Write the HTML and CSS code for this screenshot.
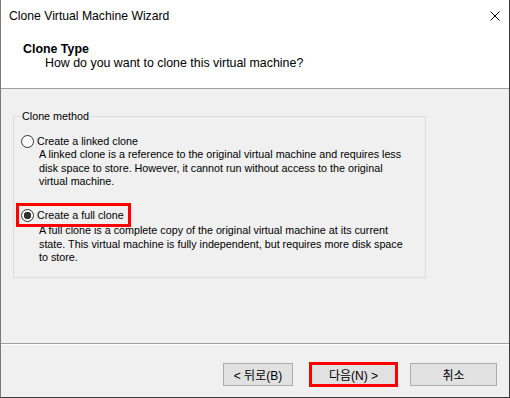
FILE: index.html
```html
<!DOCTYPE html>
<html lang="en">
<head>
    <meta charset="UTF-8">
    <meta name="viewport" content="width=device-width, initial-scale=1.0">
    <title>Clone Virtual Machine Wizard</title>
    <link rel="stylesheet" href="styles.css">
</head>
<body>

<div class="window">
    <!-- Title bar + wizard header -->
    <div class="top">
        <div class="titlebar">
            <span class="title">Clone Virtual Machine Wizard</span>
            <svg class="close" width="10" height="10" viewBox="0 0 10 10">
                <path d="M0.5 0.5 L9.5 9.5 M9.5 0.5 L0.5 9.5" stroke="#000" stroke-width="1" fill="none"/>
            </svg>
        </div>
        <div class="header">
            <div class="header-title">Clone Type</div>
            <div class="header-sub">How do you want to clone this virtual machine?</div>
        </div>
    </div>

    <!-- Page content -->
    <div class="content">
        <fieldset class="group">
            <legend>Clone method</legend>

            <div class="option">
                <label class="radio-row"><span class="radio"></span>Create a linked clone</label>
                <p class="desc">A linked clone is a reference to the original virtual machine and requires less<br>disk space to store. However, it cannot run without access to the original<br>virtual machine.</p>
            </div>

            <div class="option option-full">
                <label class="radio-row marked"><span class="radio checked"></span>Create a full clone</label>
                <p class="desc">A full clone is a complete copy of the original virtual machine at its current<br>state. This virtual machine is fully independent, but requires more disk space<br>to store.</p>
            </div>
        </fieldset>
    </div>

    <!-- Buttons -->
    <div class="footer">
        <button class="btn btn-back">&lt; 뒤로(B)</button>
        <button class="btn btn-next">다음(N) &gt;</button>
        <button class="btn btn-cancel">취소</button>
    </div>
</div>

</body>
</html>
```

FILE: styles.css
```css
body {
    margin: 0;
    font-family: "Liberation Sans", Arial, sans-serif;
    color: #000;
    background-color: #f0f0f0;
}

.window {
    width: 510px;
    height: 398px;
    box-sizing: border-box;
    display: flex;
    flex-direction: column;
    background-color: #f0f0f0;
    border-left: 1px solid #7a7a7a;
    border-right: 1px solid #3a3a3a;
    border-bottom: 1px solid #3a3a3a;
}

/* Title bar and header */
.top {
    height: 88px;
    background-color: #fff;
    border-bottom: 1px solid #a0a0a0;
}

.titlebar {
    height: 31px;
    display: flex;
    align-items: center;
    justify-content: space-between;
    padding: 0 9px 0 8px;
    font-size: 12.2px;
}

.header {
    padding: 11px 0 0 22px;
    font-size: 12.4px;
    line-height: 14px;
}

.header-title {
    font-weight: bold;
}

.header-sub {
    padding-left: 22px;
}

/* Content */
.content {
    flex: 1;
    padding: 20px 0 0 12px;
}

.group {
    width: 413px;
    box-sizing: border-box;
    margin: 0;
    padding: 11px 0 12px 7px;
    border: 1px solid #dcdcdc;
    font-size: 10.75px;
}

.group legend {
    padding: 0 1px;
    line-height: 14px;
}

.radio-row {
    display: flex;
    align-items: center;
    gap: 3px;
    width: max-content;
    padding-right: 2px;
    line-height: 14px;
}

.radio {
    width: 13px;
    height: 13px;
    box-sizing: border-box;
    border: 1px solid #333;
    border-radius: 50%;
    background-color: #fff;
}

.radio.checked {
    background: radial-gradient(circle, #333 0 3.5px, #fff 4px);
}

.marked {
    outline: 3px solid #ff0000;
    outline-offset: 2px;
}

.desc {
    margin: 0 0 0 18px;
    line-height: 13.5px;
}

.option-full {
    margin-top: 19.5px;
}

.option-full .desc {
    margin-top: 2px;
}

/* Footer buttons */
.footer {
    height: 54px;
    box-sizing: border-box;
    display: flex;
    justify-content: flex-end;
    align-items: flex-start;
    padding: 19px 12px 0 0;
    border-top: 1px solid #a0a0a0;
    box-shadow: inset 0 1px 0 #fff;
}

.btn {
    height: 23px;
    box-sizing: border-box;
    padding: 0;
    border: 1px solid #adadad;
    background-color: #e1e1e1;
    color: #000;
    font-family: "Liberation Sans", "Noto Sans CJK KR", sans-serif;
    font-size: 12px;
}

.btn-back {
    width: 70px;
}

.btn-next {
    width: 89px;
    height: 25px;
    margin: -1px 0 0 16px;
    border: 3px solid #ff0000;
}

.btn-cancel {
    width: 87px;
    margin-left: 12px;
}
```
